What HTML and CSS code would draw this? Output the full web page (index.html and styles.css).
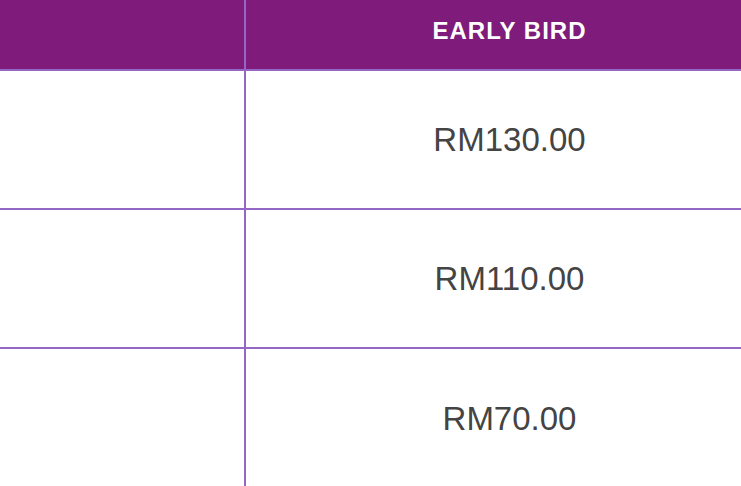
FILE: index.html
```html
<!DOCTYPE html>
<html>
<head>
<meta charset="utf-8">
<link rel="stylesheet" href="styles.css">
</head>
<body>
<div class="table">
  <div class="cell head first"></div>
  <div class="cell head">EARLY BIRD</div>
  <div class="cell first"></div>
  <div class="cell price">RM130.00</div>
  <div class="cell first"></div>
  <div class="cell price">RM110.00</div>
  <div class="cell first last"></div>
  <div class="cell price last">RM70.00</div>
</div>
</body>
</html>
```

FILE: styles.css
```css
html, body {
  margin: 0;
  padding: 0;
  background: #ffffff;
  overflow: hidden;
}
body {
  font-family: "Liberation Sans", Arial, sans-serif;
  width: 741px;
  height: 486px;
}
.table {
  display: grid;
  width: 773px;
  grid-template-columns: 246px 1fr;
  grid-template-rows: 71px 139px 139px 139px;
}
.cell {
  display: flex;
  align-items: center;
  justify-content: center;
  border-bottom: 2px solid #9466c6;
}
.first {
  border-right: 2px solid #9466c6;
}
.head {
  background: #7e1b7b;
  color: #ffffff;
  font-weight: bold;
  font-size: 24px;
  letter-spacing: 1px;
  padding-bottom: 7px;
}
.price {
  color: #444444;
  font-size: 33px;
}
.last {
  border-bottom: none;
}
```
